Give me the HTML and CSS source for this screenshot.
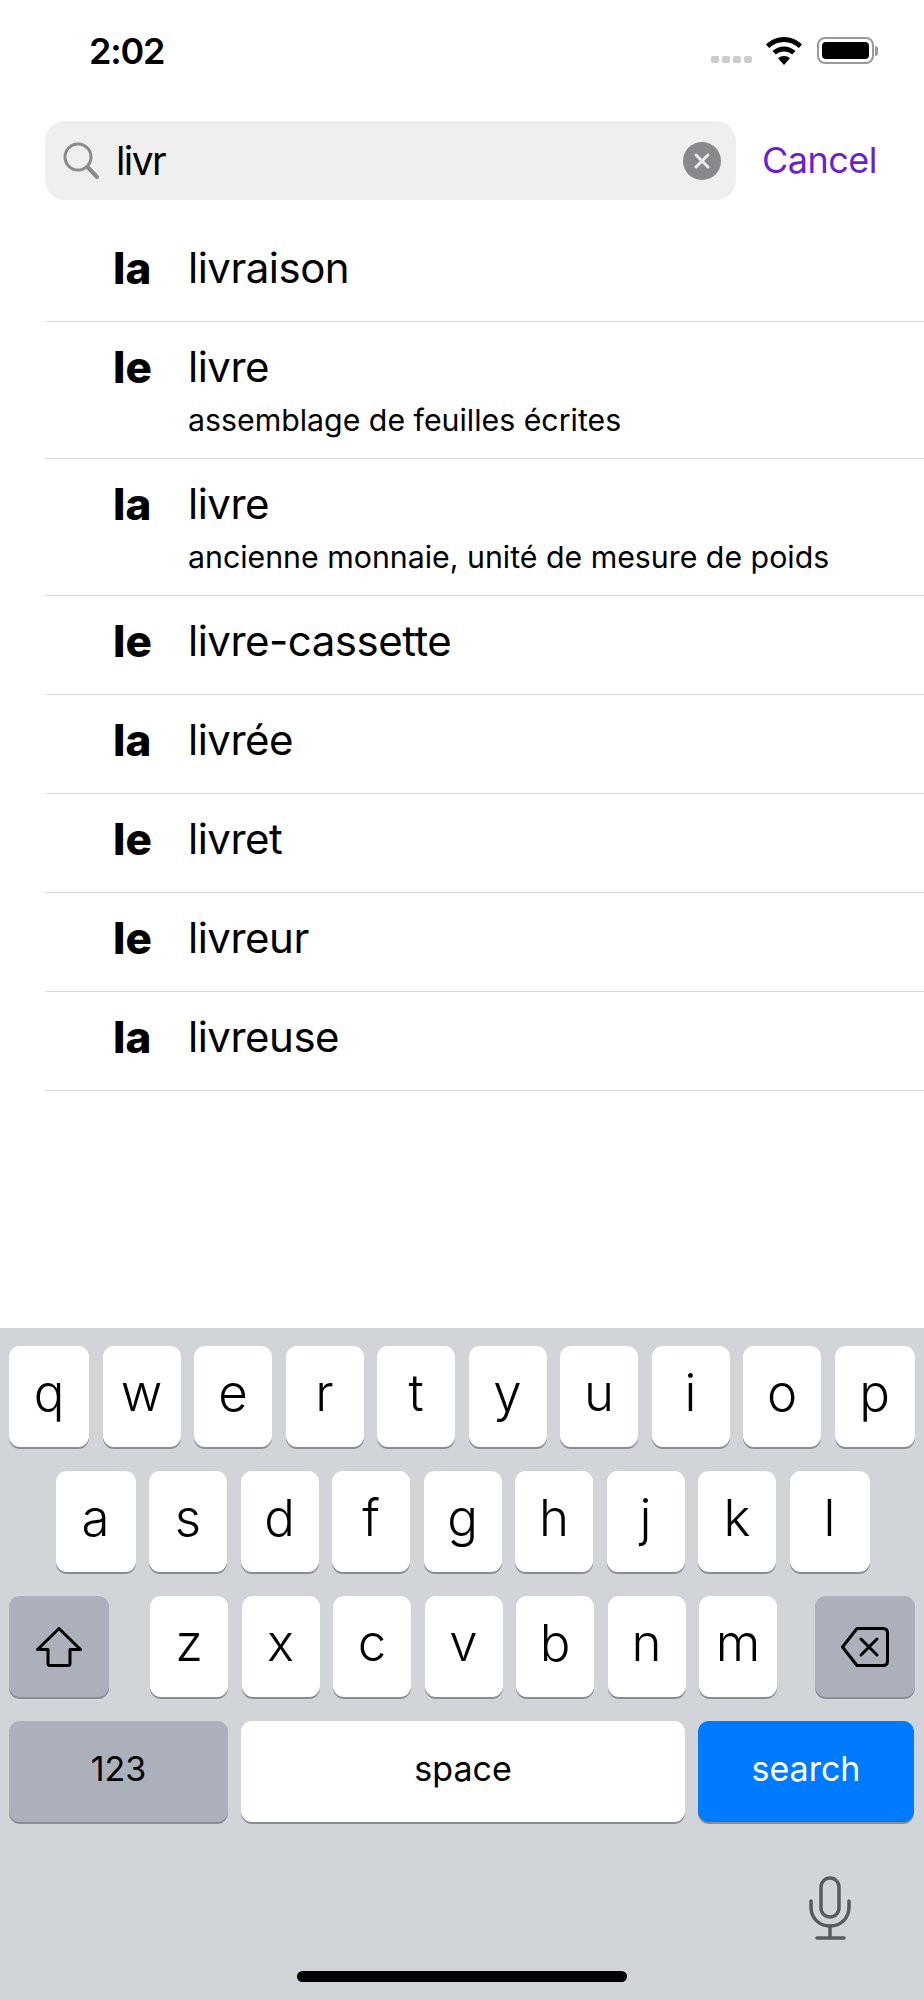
FILE: index.html
```html
<!DOCTYPE html>
<html lang="fr">
<head>
    <meta charset="UTF-8">
    <meta name="viewport" content="width=device-width, initial-scale=1.0">
    <title>Recherche</title>
    <link rel="stylesheet" href="styles.css">
</head>
<body>
    <div class="phone">
        <div class="status">
            <span class="time">2:02</span>
            <div class="status-icons">
                <div class="signal"><i></i><i></i><i></i><i></i></div>
                <svg class="wifi" width="36" height="28" viewBox="0 0 36 28">
                    <path d="M18 0C11 0 5 2.800 0 7.500L3.200 11C7.200 7.200 12.300 5 18 5s10.800 2.200 14.800 6L36 7.500C31 2.800 25 0 18 0z"/>
                    <path d="M18 9.500c-4.400 0-8.400 1.700-11.500 4.600l3.300 3.500c2.200-2 5-3.200 8.200-3.200s6 1.200 8.200 3.200l3.300-3.500C26.400 11.200 22.400 9.500 18 9.500z"/>
                    <path d="M18 19c-2.300 0-4.400.9-5.900 2.300L18 28l5.900-6.700C22.400 19.900 20.300 19 18 19z"/>
                </svg>
                <div class="battery"><div class="battery-fill"></div></div>
                <div class="battery-tip"></div>
            </div>
        </div>

        <div class="search-row">
            <div class="search-box">
                <svg class="glass" width="36" height="37" viewBox="0 0 36 37" fill="none" stroke="#8a8a8e">
                    <circle cx="15" cy="15" r="13" stroke-width="3"/>
                    <path d="M24.500 25L34 35" stroke-width="4" stroke-linecap="round"/>
                </svg>
                <span class="search-text">livr</span>
                <div class="clear">
                    <svg width="18" height="18" viewBox="0 0 18 18" stroke="#eee" stroke-width="3" stroke-linecap="round">
                        <path d="M3 3l12 12M15 3L3 15"/>
                    </svg>
                </div>
            </div>
            <span class="cancel">Cancel</span>
        </div>

        <div class="results">
            <div class="row"><span class="article">la</span><div class="word">livraison</div></div>
            <div class="row row-double">
                <span class="article">le</span>
                <div><div class="word">livre</div><div class="hint">assemblage de feuilles écrites</div></div>
            </div>
            <div class="row row-double">
                <span class="article">la</span>
                <div><div class="word">livre</div><div class="hint">ancienne monnaie, unité de mesure de poids</div></div>
            </div>
            <div class="row"><span class="article">le</span><div class="word">livre-cassette</div></div>
            <div class="row"><span class="article">la</span><div class="word">livrée</div></div>
            <div class="row"><span class="article">le</span><div class="word">livret</div></div>
            <div class="row"><span class="article">le</span><div class="word">livreur</div></div>
            <div class="row"><span class="article">la</span><div class="word">livreuse</div></div>
        </div>

        <div class="keyboard">
            <div class="keys">
                <div class="key-row">
                    <div class="key edge">q</div>
                    <div class="key">w</div>
                    <div class="key">e</div>
                    <div class="key">r</div>
                    <div class="key">t</div>
                    <div class="key">y</div>
                    <div class="key">u</div>
                    <div class="key">i</div>
                    <div class="key">o</div>
                    <div class="key edge">p</div>
                </div>
                <div class="key-row middle">
                    <div class="key edge">a</div>
                    <div class="key">s</div>
                    <div class="key">d</div>
                    <div class="key">f</div>
                    <div class="key">g</div>
                    <div class="key">h</div>
                    <div class="key">j</div>
                    <div class="key">k</div>
                    <div class="key edge">l</div>
                </div>
                <div class="key-row third">
                    <div class="key fn">
                        <svg width="46" height="40" viewBox="0 0 46 40" fill="none" stroke="#000" stroke-width="3" stroke-linejoin="round">
                            <path d="M23 1.500L1.500 22.500H12V36.500Q12 38.500 14 38.500H32Q34 38.500 34 36.500V22.500H44.500Z"/>
                        </svg>
                    </div>
                    <div class="letters">
                        <div class="key">z</div>
                        <div class="key">x</div>
                        <div class="key">c</div>
                        <div class="key">v</div>
                        <div class="key">b</div>
                        <div class="key">n</div>
                        <div class="key">m</div>
                    </div>
                    <div class="key fn">
                        <svg width="48" height="40" viewBox="0 0 48 40" fill="none" stroke="#000" stroke-width="3" stroke-linecap="round" stroke-linejoin="round">
                            <path d="M16 1.500H42Q46.500 1.500 46.500 6V34Q46.500 38.500 42 38.500H16L1.500 20Z"/>
                            <path d="M20 12l16 16M36 12L20 28"/>
                        </svg>
                    </div>
                </div>
                <div class="key-row bottom">
                    <div class="key fn label num">123</div>
                    <div class="key label space">space</div>
                    <div class="key label go">search</div>
                </div>
            </div>
            <div class="mic-row">
                <svg width="42" height="64" viewBox="0 0 42 64" fill="none" stroke="#565b62" stroke-width="3.500" stroke-linecap="round">
                    <rect x="12" y="2" width="18" height="39" rx="9"/>
                    <path d="M2 25V31C2 42 10 50 21 50S40 42 40 31V25"/>
                    <path d="M21 50V62M8 62H35"/>
                </svg>
            </div>
            <div class="home-bar"></div>
        </div>
    </div>
</body>
</html>
```

FILE: styles.css
```css
* {
    box-sizing: border-box;
}
body {
    margin: 0;
    font-family: Inter, "Liberation Sans", sans-serif;
    color: #000;
    background: #fff;
}
.phone {
    width: 924px;
    height: 2000px;
    display: flex;
    flex-direction: column;
    overflow: hidden;
}

/* status bar */
.status {
    height: 121px;
    padding: 30px 46px 0 89px;
    display: flex;
    justify-content: space-between;
    align-items: flex-start;
}
.time {
    font-size: 36px;
    font-weight: 600;
    line-height: 42px;
    letter-spacing: -1.2px;
}
.status-icons {
    display: flex;
    align-items: flex-start;
    padding-top: 7px;
}
.signal {
    display: flex;
    gap: 3px;
    margin-top: 19px;
    margin-right: 14px;
}
.signal i {
    display: block;
    width: 8px;
    height: 7px;
    border-radius: 2px;
    background: #ccc;
}
.wifi {
    margin-right: 15px;
}
.battery {
    width: 57px;
    height: 27px;
    padding: 3px;
    border: 2px solid #999;
    border-radius: 8px;
}
.battery-fill {
    height: 100%;
    background: #000;
    border-radius: 4px;
}
.battery-tip {
    width: 3px;
    height: 10px;
    margin-top: 9px;
    margin-left: 1px;
    background: #999;
    border-radius: 0 3px 3px 0;
}

/* search */
.search-row {
    display: flex;
    align-items: center;
    padding-left: 45px;
}
.search-box {
    width: 691px;
    height: 79px;
    padding: 0 15px 0 18px;
    display: flex;
    align-items: center;
    background: #efefef;
    border-radius: 20px;
}
.search-text {
    margin-left: 17px;
    font-size: 39px;
    letter-spacing: -1.6px;
    flex: 1;
}
.cancel {
    margin-left: 26px;
    margin-top: -2px;
    font-size: 36px;
    letter-spacing: -0.5px;
    color: #6a1fd0;
}
.clear {
    width: 38px;
    height: 38px;
    border-radius: 50%;
    background: #88888d;
    display: flex;
    align-items: center;
    justify-content: center;
}

/* results */
.results {
    margin-left: 45px;
    margin-top: 23px;
}
.row {
    height: 99px;
    border-bottom: 1px solid #d8d8d8;
    display: flex;
    align-items: flex-start;
    padding-top: 18px;
}
.row-double {
    height: 137px;
    padding-top: 18px;
}
.article {
    width: 143px;
    padding-left: 68px;
    font-size: 44px;
    line-height: 54px;
    font-weight: 800;
}
.word {
    font-size: 42px;
    line-height: 54px;
    letter-spacing: -0.5px;
}
.hint {
    font-size: 30.3px;
    line-height: 36px;
    margin-top: 8px;
}

/* keyboard */
.keyboard {
    margin-top: auto;
    height: 672px;
    background: #d1d4d9;
    padding-top: 18px;
}
.keys {
    padding: 0 9px;
    display: flex;
    flex-direction: column;
    gap: 24px;
}
.key-row {
    display: flex;
    gap: 13.5px;
}
.middle {
    justify-content: center;
    padding-left: 1px;
}
.third {
    gap: 0;
}
.letters {
    display: flex;
    gap: 13.5px;
    margin-right: 38px;
    margin-left: 41px;
}
.key {
    width: 78px;
    height: 101px;
    background: #fff;
    border-radius: 11px;
    box-shadow: 0 2px 0 #888d96;
    display: flex;
    align-items: center;
    justify-content: center;
    font-size: 51px;
    font-weight: 300;
    padding-bottom: 8px;
}
.edge {
    width: 80px;
}
.fn {
    width: 100px;
    flex-shrink: 0;
    background: #abb0bb;
    padding-bottom: 0;
}
.label {
    font-size: 34px;
    font-weight: 400;
    padding-bottom: 6px;
}
.bottom {
    gap: 13px;
}
.num {
    width: 219px;
}
.space {
    width: 444px;
}
.go {
    width: 216px;
    background: #007aff;
    color: #fff;
}
.mic-row {
    display: flex;
    justify-content: flex-end;
    padding: 54px 73px 0 0;
}
.home-bar {
    width: 330px;
    height: 11px;
    margin: 31px auto 0;
    background: #000;
    border-radius: 6px;
}
```
